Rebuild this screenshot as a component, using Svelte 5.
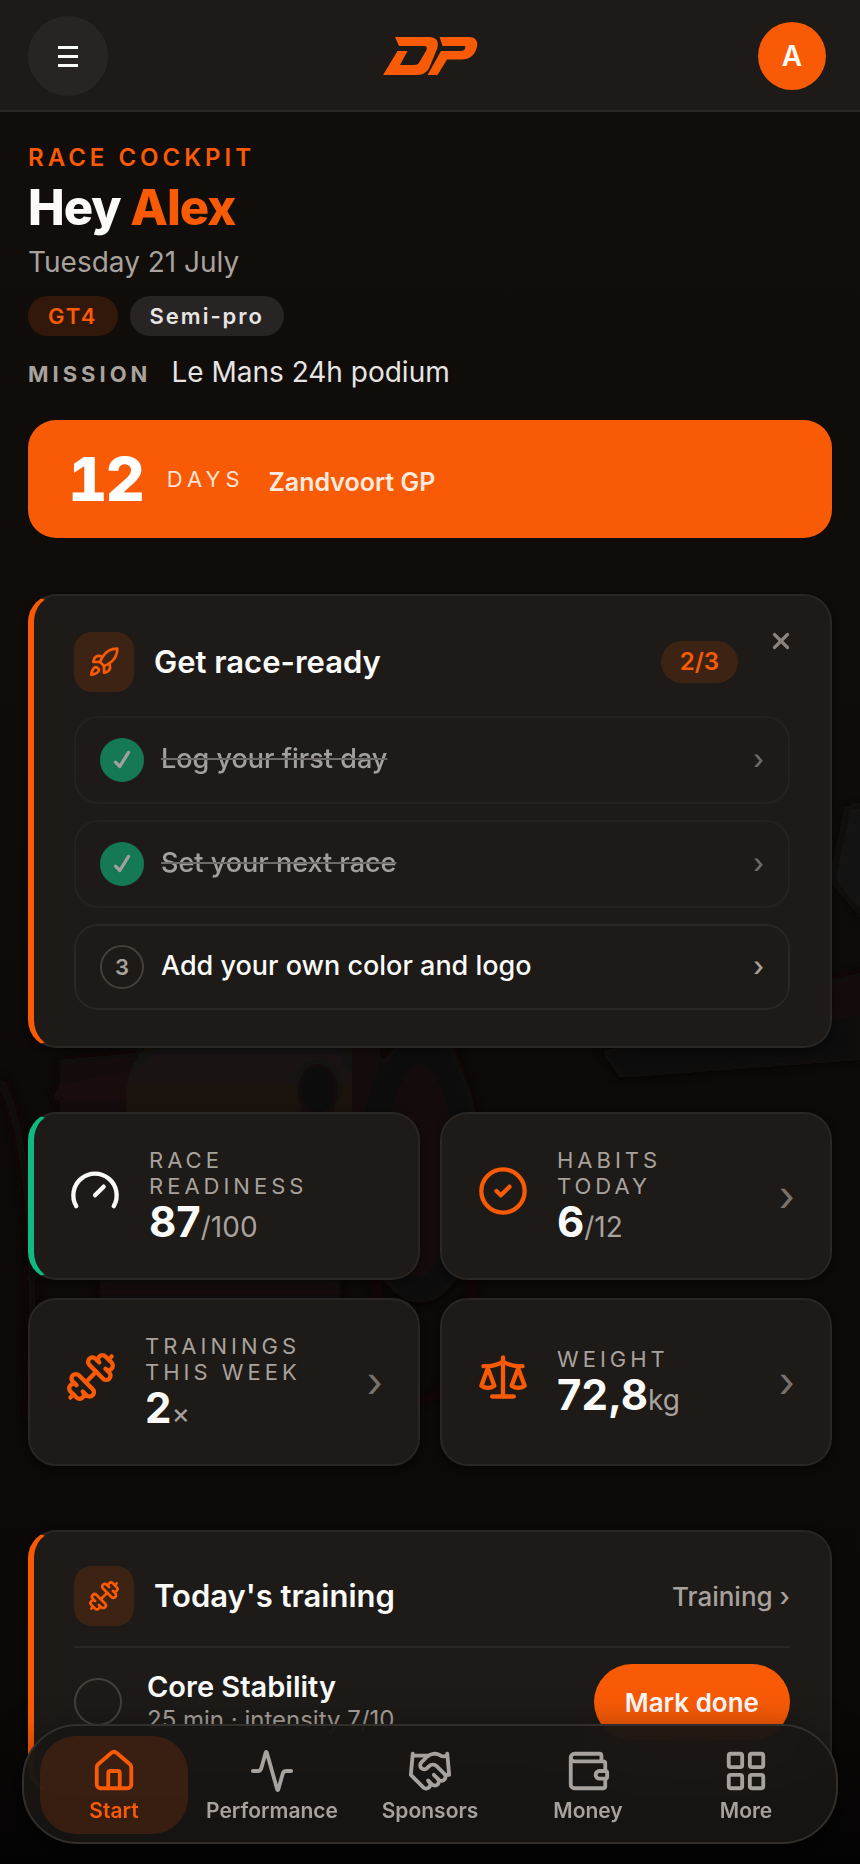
<script>
  const icons = {
    rocket: [
      'M4.5 16.5c-1.5 1.26-2 5-2 5s3.74-.5 5-2c.71-.84.7-2.13-.09-2.91a2.18 2.18 0 0 0-2.91-.09z',
      'm12 15-3-3a22 22 0 0 1 2-3.95A12.88 12.88 0 0 1 22 2c0 2.72-.78 7.5-6 11a22.35 22.35 0 0 1-4 2z',
      'M9 12H4s.55-3.03 2-4c1.62-1.08 5 0 5 0',
      'M12 15v5s3.03-.55 4-2c1.08-1.62 0-5 0-5'
    ],
    gauge: ['m12 14 4-4', 'M3.34 19a10 10 0 1 1 17.32 0'],
    check: ['m18 5-8 13-4-4'],
    close: ['M18 6 6 18', 'm6 6 12 12'],
    circleCheck: ['M2 12a10 10 0 1 0 20 0a10 10 0 1 0-20 0', 'm9 12 2 2 4-4'],
    dumbbell: [
      'M17.596 12.768a2 2 0 1 0 2.829-2.829l-1.768-1.767a2 2 0 0 0 2.828-2.829l-2.828-2.828a2 2 0 0 0-2.829 2.828l-1.767-1.768a2 2 0 1 0-2.829 2.829z',
      'm2.5 21.5 1.4-1.4',
      'm20.1 3.9 1.4-1.4',
      'M5.343 21.485a2 2 0 1 0 2.829-2.828l1.767 1.768a2 2 0 1 0 2.829-2.829l-6.364-6.364a2 2 0 1 0-2.829 2.829l1.768 1.767a2 2 0 0 0-2.828 2.829z',
      'm9.6 14.4 4.8-4.8'
    ],
    scale: [
      'm16 16 3-8 3 8c-.87.65-1.92 1-3 1s-2.13-.35-3-1Z',
      'm2 16 3-8 3 8c-.87.65-1.92 1-3 1s-2.13-.35-3-1Z',
      'M7 21h10',
      'M12 3v18',
      'M3 7h2c2 0 5-1 7-2 2 1 5 2 7 2h2'
    ],
    house: [
      'M15 21v-8a1 1 0 0 0-1-1h-4a1 1 0 0 0-1 1v8',
      'M3 10a2 2 0 0 1 .709-1.528l7-5.999a2 2 0 0 1 2.582 0l7 5.999A2 2 0 0 1 21 10v9a2 2 0 0 1-2 2H5a2 2 0 0 1-2-2z'
    ],
    activity: [
      'M22 12h-2.48a2 2 0 0 0-1.93 1.46l-2.35 8.36a.25.25 0 0 1-.48 0L9.24 2.18a.25.25 0 0 0-.48 0l-2.35 8.36A2 2 0 0 1 4.49 12H2'
    ],
    handshake: [
      'm11 17 2 2a1 1 0 1 0 3-3',
      'm14 14 2.5 2.5a1 1 0 1 0 3-3l-3.88-3.88a3 3 0 0 0-4.24 0l-.88.88a1 1 0 1 1-3-3l2.81-2.81a5.79 5.79 0 0 1 7.06-.87l.47.28a2 2 0 0 0 1.42.25L21 4',
      'm21 3 1 11h-2',
      'M3 3 2 14l6.5 6.5a1 1 0 1 0 3-3',
      'M3 4h8'
    ],
    wallet: [
      'M19 7V4a1 1 0 0 0-1-1H5a2 2 0 0 0 0 4h15a1 1 0 0 1 1 1v4h-3a2 2 0 0 0 0 4h3a1 1 0 0 0 1-1v-2a1 1 0 0 0-1-1',
      'M3 5v14a2 2 0 0 0 2 2h15a1 1 0 0 0 1-1v-4'
    ],
    grid: [
      'M4 3h5a1 1 0 0 1 1 1v5a1 1 0 0 1-1 1H4a1 1 0 0 1-1-1V4a1 1 0 0 1 1-1z',
      'M15 3h5a1 1 0 0 1 1 1v5a1 1 0 0 1-1 1h-5a1 1 0 0 1-1-1V4a1 1 0 0 1 1-1z',
      'M15 14h5a1 1 0 0 1 1 1v5a1 1 0 0 1-1 1h-5a1 1 0 0 1-1-1v-5a1 1 0 0 1 1-1z',
      'M4 14h5a1 1 0 0 1 1 1v5a1 1 0 0 1-1 1H4a1 1 0 0 1-1-1v-5a1 1 0 0 1 1-1z'
    ]
  };

  const steps = [
    { label: 'Log your first day', done: true },
    { label: 'Set your next race', done: true },
    { label: 'Add your own color and logo', done: false }
  ];

  const stats = [
    { icon: 'gauge', label: 'Race readiness', value: '87', unit: '/100', tone: 'good' },
    { icon: 'circleCheck', label: 'Habits today', value: '6', unit: '/12', href: '#habits' },
    { icon: 'dumbbell', label: 'Trainings this week', value: '2', unit: '×', href: '#training' },
    { icon: 'scale', label: 'Weight', value: '72,8', unit: 'kg', href: '#weight' }
  ];

  const tabs = [
    { icon: 'house', label: 'Start' },
    { icon: 'activity', label: 'Performance' },
    { icon: 'handshake', label: 'Sponsors' },
    { icon: 'wallet', label: 'Money' },
    { icon: 'grid', label: 'More' }
  ];

  let active = $state('Start');
  let showOnboarding = $state(true);
  let trained = $state(false);
  const doneCount = steps.filter((s) => s.done).length;
</script>

{#snippet icon(name, size, weight = 2)}
  <svg
    class="icon"
    width={size}
    height={size}
    viewBox="0 0 24 24"
    fill="none"
    stroke="currentColor"
    stroke-width={weight}
    stroke-linecap="round"
    stroke-linejoin="round"
    aria-hidden="true"
  >
    {#each icons[name] as d}<path {d} />{/each}
  </svg>
{/snippet}

<div class="app">
  <!-- Dimmed race car behind the cards -->
  <svg class="backdrop" viewBox="0 0 860 1864" aria-hidden="true">
    <defs>
      <linearGradient id="panel" x1="0" y1="0" x2="0" y2="1">
        <stop offset="0" stop-color="#191611" />
        <stop offset="0.5" stop-color="#1a1813" />
        <stop offset="1" stop-color="#1e1005" />
      </linearGradient>
      <filter id="soft"><feGaussianBlur stdDeviation="5" /></filter>
    </defs>
    <g filter="url(#soft)">
      <path d="M60 1060 380 1030V1130H60Z" fill="#150e0a" />
      <path d="M60 1085 130 1070V1100H50Z" fill="#1d0e08" />
      <path d="M148 1040H352V1120H128Q118 1080 148 1040Z" fill="url(#panel)" />
      <ellipse cx="318" cy="1090" rx="20" ry="26" fill="#100c0a" />
      <ellipse cx="420" cy="1170" rx="48" ry="120" fill="#15110c" stroke="#0f0a08" stroke-width="26" />
      <ellipse cx="424" cy="1210" rx="52" ry="190" fill="none" stroke="#17100b" stroke-width="5" />
      <path d="M100 1280H340V1298H100Z" fill="#190f0b" />
      <path d="M0 1080Q40 1150 30 1420" fill="none" stroke="#15110c" stroke-width="8" />
      <path d="M600 1050 860 1020V1060L620 1078Z" fill="#110c0a" />
      <path d="M848 806H870V925L832 880Z" fill="#141417" />
      <path d="M830 980 870 970V1016L830 1022Z" fill="#190c08" />
    </g>
  </svg>

  <header class="topbar">
    <button class="menu" aria-label="Menu">
      <svg width="20" height="21" viewBox="0 0 20 21" fill="currentColor" aria-hidden="true">
        <path d="M0 0h20v3H0zM0 9h20v3H0zM0 18h20v3H0z" />
      </svg>
    </button>
    <svg class="logo" width="96" height="40" viewBox="-1 0 96 40" role="img" aria-label="DP">
      <path
        d="M12 1H46C54 1 56.500 6 54 13L47 30C45 36 40 39 34 39H0L14.500 15H24.500L17 29H31C34 29 35.500 28 36.500 26L43.500 14C44.500 11.500 43.500 10 41 10H16Z"
      />
      <path
        d="M56.500 1H86C94 1 95.500 7 93.500 12.500C91 20 86 23.500 79 23.500H64L54.500 39H44.500L58 15H78C81 15 83 13 82 10H59.500Z"
      />
    </svg>
    <button class="account" aria-label="Account"><span class="avatar">A</span></button>
  </header>

  <main>
    <section class="hero">
      <p class="eyebrow">RACE COCKPIT</p>
      <h1>Hey <em>Alex</em></h1>
      <p class="date">Tuesday 21 July</p>
      <div class="tags">
        <span class="tag accent">GT4</span>
        <span class="tag">Semi-pro</span>
      </div>
      <p class="mission"><span class="mission-label">MISSION</span> <span>Le Mans 24h podium</span></p>
      <a class="countdown" href="#race">
        <strong>12</strong>
        <span class="unit">DAYS</span>
        <span class="race">Zandvoort GP</span>
      </a>
    </section>

    {#if showOnboarding}
      <section class="card onboarding">
        <button class="dismiss" aria-label="Close" onclick={() => (showOnboarding = false)}>
          {@render icon('close', 26, 3)}
        </button>
        <div class="card-head with-dismiss">
          <span class="tile">{@render icon('rocket', 32)}</span>
          <h2>Get race-ready</h2>
          <span class="count">{doneCount}/{steps.length}</span>
        </div>
        <ol class="steps">
          {#each steps as step, i}
            <li>
              <a class="step" class:done={step.done} href="#step-{i + 1}">
                <span class="marker">
                  {#if step.done}{@render icon('check', 26, 3)}{:else}{i + 1}{/if}
                </span>
                <span class="step-label">{step.label}</span>
                <span class="step-go">›</span>
              </a>
            </li>
          {/each}
        </ol>
      </section>
    {/if}

    <section class="stats">
      {#each stats as s}
        <svelte:element this={s.href ? 'a' : 'div'} class="card stat {s.tone ?? ''}" href={s.href}>
          <span class="stat-icon">{@render icon(s.icon, 52)}</span>
          <span class="stat-body">
            <span class="stat-label">{s.label}</span>
            <span class="stat-value">{s.value}<small>{s.unit}</small></span>
          </span>
          {#if s.href}<span class="stat-go">›</span>{/if}
        </svelte:element>
      {/each}
    </section>

    <section class="card training">
      <div class="card-head">
        <span class="tile">{@render icon('dumbbell', 32)}</span>
        <h2>Today's training</h2>
        <a class="more" href="#training">Training ›</a>
      </div>
      <div class="session">
        <input id="core" type="checkbox" bind:checked={trained} />
        <div class="session-text">
          <label for="core">Core Stability</label>
          <p>25 min · intensity 7/10</p>
        </div>
        <button class="primary" onclick={() => (trained = true)}>Mark done</button>
      </div>
    </section>
  </main>

  <nav class="tabbar" aria-label="Main">
    {#each tabs as t}
      <a
        href="#{t.label.toLowerCase()}"
        class:active={active === t.label}
        aria-current={active === t.label ? 'page' : undefined}
        onclick={() => (active = t.label)}
      >
        {@render icon(t.icon, 46)}
        <span>{t.label}</span>
      </a>
    {/each}
  </nav>
</div>

<style>
  :global(body) {
    background: #0c0a09;
  }

  .app {
    --orange: #f95a06;
    --orange-soft: rgba(249, 90, 6, 0.15);
    --surface: #1d1a17;
    --line: #292625;
    --text: #fafaf9;
    --muted: #a8a29e;
    --faint: #78716c;
    position: relative;
    min-height: 100vh;
    font-family: Inter, 'Liberation Sans', sans-serif;
    color: var(--text);
    background: linear-gradient(#110e0b, #0e0b09 720px, #0c0908 1300px, #0b0908 1700px, #050404 1864px);
  }

  .app :global(*) {
    box-sizing: border-box;
  }

  h1,
  h2,
  p,
  ol {
    margin: 0;
    padding: 0;
  }

  a {
    color: inherit;
    text-decoration: none;
  }

  button {
    border: 0;
    font: inherit;
    color: inherit;
    cursor: pointer;
  }

  .icon {
    display: block;
    flex: none;
  }

  .backdrop {
    position: absolute;
    top: 0;
    left: 0;
    width: 100%;
    opacity: 0.8;
  }

  /* Top bar */
  .topbar {
    position: relative;
    display: flex;
    align-items: center;
    justify-content: space-between;
    padding: 16px 28px 14px;
    background: var(--surface);
    border-bottom: 2px solid var(--line);
  }

  .menu,
  .account {
    display: grid;
    place-items: center;
    width: 80px;
    height: 80px;
    padding: 0;
    border-radius: 50%;
    background: none;
  }

  .menu {
    background: #272423;
  }

  .logo {
    fill: var(--orange);
  }

  .avatar {
    display: grid;
    place-items: center;
    width: 68px;
    height: 68px;
    border-radius: 50%;
    background: var(--orange);
    font-size: 28px;
    font-weight: 600;
  }

  main {
    position: relative;
    display: flex;
    flex-direction: column;
    padding: 32px 28px 72px;
  }

  /* Hero */
  .eyebrow {
    font-size: 24px;
    line-height: 28px;
    font-weight: 600;
    letter-spacing: 4px;
    color: var(--orange);
  }

  h1 {
    margin-top: 8px;
    font-size: 49px;
    line-height: 56px;
    font-weight: 800;
    letter-spacing: -1px;
  }

  h1 em {
    font-style: normal;
    color: var(--orange);
  }

  .date {
    margin-top: 8px;
    font-size: 28px;
    line-height: 36px;
    color: var(--muted);
  }

  .tags {
    display: flex;
    gap: 12px;
    margin-top: 16px;
  }

  .tag {
    padding: 0 20px;
    border-radius: 20px;
    background: #272423;
    font-size: 22px;
    line-height: 40px;
    font-weight: 600;
    letter-spacing: 2px;
    color: #e7e5e4;
  }

  .tag.accent {
    background: var(--orange-soft);
    color: var(--orange);
  }

  .mission {
    display: flex;
    align-items: baseline;
    gap: 20px;
    margin-top: 18px;
    font-size: 28px;
    line-height: 36px;
    color: #e7e5e4;
  }

  .mission-label {
    font-size: 22px;
    font-weight: 700;
    letter-spacing: 4px;
    color: var(--muted);
  }

  .countdown {
    display: flex;
    align-items: center;
    gap: 24px;
    margin-top: 28px;
    padding: 24px 40px;
    border-radius: 28px;
    background: var(--orange);
  }

  .countdown strong {
    font-size: 61px;
    line-height: 70px;
    font-weight: 800;
    font-variant-numeric: tabular-nums;
    letter-spacing: -2px;
    color: #fff;
  }

  .unit {
    font-size: 22px;
    letter-spacing: 5px;
    color: #fde3d3;
  }

  .race {
    padding-top: 6px;
    font-size: 25px;
    font-weight: 600;
    color: #feeadf;
  }

  /* Cards */
  .card {
    position: relative;
    border: 2px solid var(--line);
    border-radius: 28px;
    background: var(--surface);
    box-shadow: 0 2px 6px rgba(0, 0, 0, 0.4);
  }

  .onboarding,
  .training {
    padding: 36px 40px;
    border-left: 6px solid var(--orange);
  }

  .onboarding {
    margin-top: 56px;
  }

  .card-head {
    display: flex;
    align-items: center;
    gap: 20px;
  }

  .with-dismiss {
    padding-right: 52px;
  }

  .tile {
    display: grid;
    place-items: center;
    width: 60px;
    height: 60px;
    border-radius: 18px;
    background: var(--orange-soft);
    color: var(--orange);
  }

  h2 {
    flex: 1;
    font-size: 31px;
    line-height: 40px;
    font-weight: 600;
  }

  .count {
    padding: 0 19px;
    border-radius: 21px;
    background: var(--orange-soft);
    font-size: 24px;
    line-height: 42px;
    font-weight: 600;
    color: var(--orange);
  }

  .dismiss {
    position: absolute;
    top: 20px;
    right: 24px;
    display: grid;
    place-items: center;
    width: 50px;
    height: 50px;
    padding: 0;
    background: none;
    color: #8a837e;
  }

  .steps {
    display: grid;
    gap: 16px;
    margin-top: 24px;
    list-style: none;
  }

  .step {
    display: flex;
    align-items: center;
    gap: 17px;
    padding: 19px 24px;
    border: 2px solid var(--line);
    border-radius: 24px;
    font-size: 27px;
    line-height: 32px;
    font-weight: 500;
  }

  .step.done {
    padding: 20px 24px;
    opacity: 0.6;
  }

  .marker {
    display: grid;
    place-items: center;
    width: 44px;
    height: 44px;
    border: 2px solid #44403c;
    border-radius: 50%;
    font-size: 22px;
    font-weight: 600;
    color: var(--muted);
  }

  .done .marker {
    border: 0;
    background: #10b981;
    color: var(--text);
  }

  .step-label {
    flex: 1;
    padding-bottom: 2px;
  }

  .done .step-label {
    text-decoration: line-through 2px #a8a29e;
  }

  .step-go {
    color: var(--muted);
  }

  /* Stat tiles */
  .stats {
    display: grid;
    grid-template-columns: 1fr 1fr;
    gap: 18px 20px;
    margin: 64px 0;
  }

  .stat {
    display: flex;
    align-items: center;
    gap: 28px;
    padding: 33px 35px;
  }

  .stat.good {
    border-left: 6px solid #10b981;
  }

  .stat-icon {
    padding-bottom: 11px;
    color: var(--orange);
  }

  .good .stat-icon {
    color: var(--text);
  }

  .stat-body {
    flex: 1;
    display: flex;
    flex-direction: column;
  }

  .stat-label {
    font-size: 22px;
    line-height: 26px;
    letter-spacing: 4px;
    text-transform: uppercase;
    color: var(--muted);
  }

  .stat-value {
    font-size: 42px;
    line-height: 46px;
    font-weight: 700;
  }

  .stat-value small {
    font-size: 28px;
    line-height: 28px;
    font-weight: 400;
    color: var(--muted);
  }

  .stat-go {
    font-size: 42px;
    line-height: 46px;
    color: var(--faint);
  }

  /* Training */
  .training {
    padding: 34px 40px 36px;
  }

  .more {
    font-size: 26px;
    font-weight: 500;
    color: var(--muted);
  }

  .session {
    display: flex;
    align-items: center;
    gap: 25px;
    margin-top: 20px;
    padding: 16px 0;
    border-top: 2px solid var(--line);
  }

  .session input {
    appearance: none;
    flex: none;
    width: 48px;
    height: 48px;
    margin: 0;
    border: 2px solid #44403c;
    border-radius: 50%;
  }

  .session input:checked {
    background: #10b981;
  }

  .session-text {
    flex: 1;
  }

  .session-text label {
    display: block;
    font-size: 29px;
    line-height: 36px;
    font-weight: 600;
  }

  .session-text p {
    font-size: 24px;
    line-height: 30px;
    color: var(--muted);
  }

  .primary {
    height: 76px;
    padding: 0 31px;
    border-radius: 38px;
    background: var(--orange);
    font-size: 26px;
    font-weight: 600;
  }

  /* Bottom navigation */
  .tabbar {
    position: fixed;
    right: 22px;
    bottom: 20px;
    left: 22px;
    display: grid;
    grid-template-columns: repeat(5, 1fr);
    gap: 10px;
    padding: 10px 16px 8px;
    border: 2px solid #312e2b;
    border-radius: 56px;
    background: rgba(24, 22, 19, 0.92);
    backdrop-filter: blur(32px);
    box-shadow: 0 12px 40px rgba(0, 0, 0, 0.55);
  }

  .tabbar a {
    display: flex;
    flex-direction: column;
    align-items: center;
    gap: 4px;
    padding: 12px 0 10px;
    border-radius: 36px;
    font-size: 21px;
    line-height: 26px;
    font-weight: 600;
    color: var(--muted);
  }

  .tabbar a.active {
    background: var(--orange-soft);
    color: var(--orange);
  }
</style>
